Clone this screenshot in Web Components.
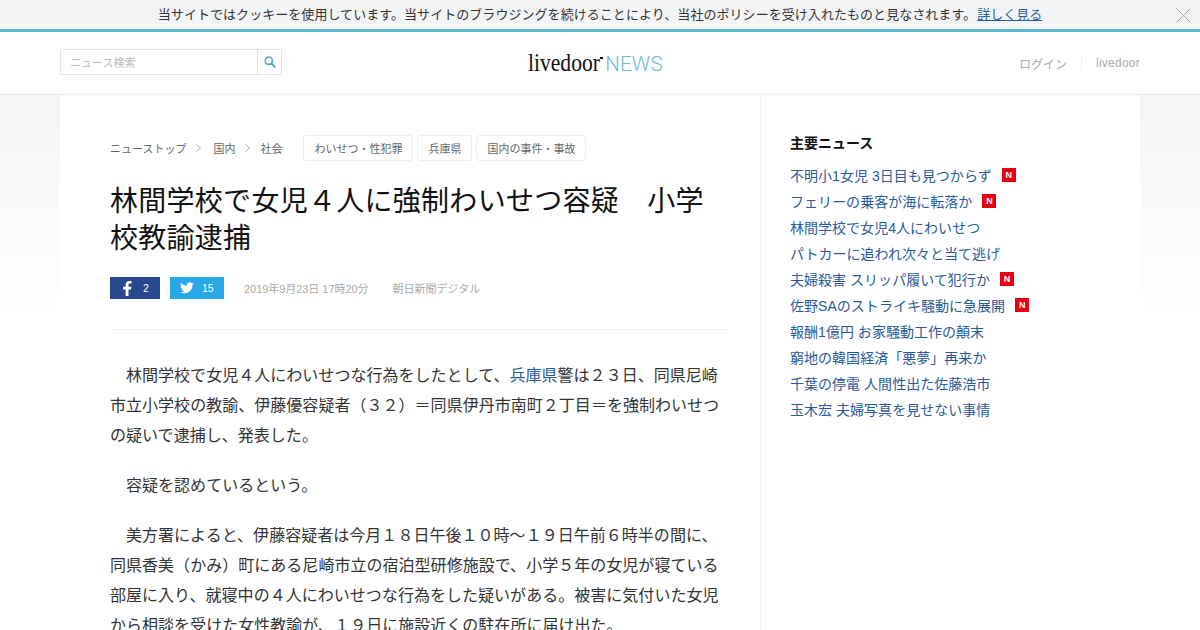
<!DOCTYPE html>
<html lang="ja">
<head>
<meta charset="utf-8">
<title>livedoor NEWS</title>
<style>
  html, body { margin: 0; height: 630px; overflow: hidden; }
  body {
    font-family: "Liberation Sans", "Noto Sans CJK JP", sans-serif;
    background: linear-gradient(#f3f4f5 95px, #fff 330px);
    display: flex;
    flex-direction: column;
  }
  news-article a { color: #2a5a9e; text-decoration: none; }
</style>
</head>
<body>
<cookie-bar>当サイトではクッキーを使用しています。当サイトのブラウジングを続けることにより、当社のポリシーを受け入れたものと見なされます。</cookie-bar>
<site-header></site-header>
<page-main>
  <news-article>
    <p>林間学校で女児４人にわいせつな行為をしたとして、<a href="#">兵庫県</a>警は２３日、同県尼崎市立小学校の教諭、伊藤優容疑者（３２）＝同県伊丹市南町２丁目＝を強制わいせつの疑いで逮捕し、発表した。</p>
    <p>容疑を認めているという。</p>
    <p>美方署によると、伊藤容疑者は今月１８日午後１０時～１９日午前６時半の間に、同県香美（かみ）町にある尼崎市立の宿泊型研修施設で、小学５年の女児が寝ている部屋に入り、就寝中の４人にわいせつな行為をした疑いがある。被害に気付いた女児から相談を受けた女性教諭が、１９日に施設近くの駐在所に届け出た。</p>
  </news-article>
  <news-side>
    <news-item new>不明小1女児 3日目も見つからず</news-item>
    <news-item new>フェリーの乗客が海に転落か</news-item>
    <news-item>林間学校で女児4人にわいせつ</news-item>
    <news-item>パトカーに追われ次々と当て逃げ</news-item>
    <news-item new>夫婦殺害 スリッパ履いて犯行か</news-item>
    <news-item new>佐野SAのストライキ騒動に急展開</news-item>
    <news-item>報酬1億円 お家騒動工作の顛末</news-item>
    <news-item>窮地の韓国経済「悪夢」再来か</news-item>
    <news-item>千葉の停電 人間性出た佐藤浩市</news-item>
    <news-item>玉木宏 夫婦写真を見せない事情</news-item>
  </news-side>
</page-main>
<script>
class CookieBar extends HTMLElement {
  constructor() {
    super();
    this.attachShadow({ mode: 'open' });
    this.shadowRoot.innerHTML = `
      <style>
        :host {
          display: flex;
          flex: none;
          justify-content: center;
          align-items: center;
          position: relative;
          box-sizing: border-box;
          height: 32px;
          padding-bottom: 2px;
          background: #f3f4f5;
          border-bottom: 3px solid #5bb7ce;
          font-size: 13px;
          letter-spacing: 0.05px;
          color: #333;
        }
        a { color: #2a5a9e; margin-left: 1px; letter-spacing: 0; }
        svg { position: absolute; right: 9px; top: 8px; }
      </style>
      <span><slot></slot><a href="#">詳しく見る</a></span>
      <svg width="15" height="15" viewBox="0 0 15 15" fill="none" stroke="#aaa" stroke-width="1"><path d="M0.5 0.5l14 14M14.5 0.5l-14 14"/></svg>
    `;
  }
}

class SiteHeader extends HTMLElement {
  constructor() {
    super();
    this.attachShadow({ mode: 'open' });
    this.shadowRoot.innerHTML = `
      <style>
        :host {
          display: grid;
          grid-template-columns: 1fr auto 1fr;
          align-items: center;
          flex: none;
          height: 62px;
          padding: 0 60px;
          background: #fff;
          border-bottom: 1px solid #e8e8e8;
        }
        .search { display: flex; width: 222px; height: 26px; margin-top: -2px; box-sizing: border-box; border: 1px solid #e2e5e5; }
        .search span { flex: 1; padding-left: 9px; font-size: 11px; line-height: 26px; color: #bbb; }
        .search i { display: flex; width: 23px; align-items: center; justify-content: center; border-left: 1px solid #e2e5e5; }
        .logo { display: flex; align-items: baseline; margin-right: 9px; }
        .logo b { display: block; width: 73px; font: 400 26px/1 "Liberation Serif", serif; color: #111; transform: scaleX(.83); transform-origin: left; white-space: nowrap; }
        .logo sup { width: 3px; height: 2px; background: #111; align-self: flex-start; margin: 7px 2px 0 -1px; }
        .logo span { font: 300 20.5px/1 Roboto, sans-serif; color: #6cbcd3; letter-spacing: 0.2px; }
        nav { display: flex; justify-content: flex-end; align-items: center; font-size: 12px; color: #aaa; }
        nav span + span { margin-left: 14px; padding-left: 14px; border-left: 1px solid #eee; letter-spacing: 0.25px; }
      </style>
      <div class="search">
        <span>ニュース検索</span>
        <i><svg width="12" height="12" viewBox="0 0 13 13" fill="none" stroke="#52abc6" stroke-width="1.8"><circle cx="5.200" cy="5.200" r="3.900"/><path d="M8 8l4.200 4.200" stroke-width="2.200"/></svg></i>
      </div>
      <div class="logo"><b>livedoor</b><sup></sup><span>NEWS</span></div>
      <nav><span>ログイン</span><span>livedoor</span></nav>
    `;
  }
}

class PageMain extends HTMLElement {
  constructor() {
    super();
    this.attachShadow({ mode: 'open' });
    this.shadowRoot.innerHTML = `
      <style>
        :host {
          display: flex;
          flex: 1;
          min-height: 0;
          margin: 0 60px;
          background: #fff;
          overflow: hidden;
        }
      </style>
      <slot></slot>
    `;
  }
}

class NewsArticle extends HTMLElement {
  constructor() {
    super();
    this.attachShadow({ mode: 'open' });
    this.shadowRoot.innerHTML = `
      <style>
        :host {
          display: block;
          flex: none;
          box-sizing: border-box;
          width: 701px;
          padding: 40px 30px 0 50px;
          border-right: 1px solid #f3f3f3;
        }
        .crumbs { display: flex; align-items: center; height: 26px; font-size: 11px; color: #666; }
        .crumbs svg { margin: 0 11px 0 10px; }
        .crumbs svg.first { margin-right: 12px; }
        .crumbs svg.second { margin-right: 10px; }
        .tags { display: flex; gap: 4px; margin-left: 21px; }
        .tags span { height: 24px; line-height: 26px; padding: 0 10px; border: 1px solid #eee; border-radius: 3px; }
        h1 { margin: 22px 0 0; font-size: 28px; font-weight: 400; line-height: 37px; letter-spacing: 0.28px; color: #111; }
        .meta { display: flex; align-items: center; height: 22px; margin-top: 20px; padding-bottom: 30px; border-bottom: 1px solid #f3f3f3; font-size: 11px; color: #aaa; }
        .btn { display: flex; align-items: center; height: 22px; color: #fff; font-size: 10.5px; }
        .fb { width: 50px; background: #26488f; margin-right: 10px; }
        .fb svg { margin: 0 11px 0 13px; }
        .tw { width: 54px; background: #2ba6ea; margin-right: 20px; }
        .tw svg { margin: 0 8px 0 10px; }
        .date { letter-spacing: -0.05px; }
        .source { margin-left: 24px; }
        .body { margin-top: 31px; font-size: 16px; line-height: 30px; letter-spacing: 0.03px; color: #333; }
        ::slotted(p) { margin: 0 0 20px; text-indent: 1em; }
      </style>
      <div class="crumbs">
        <span>ニューストップ</span>
        <svg class="first" width="5" height="8" viewBox="0 0 5 8" fill="none" stroke="#aaa"><path d="M0.5 0.5l4 3.5-4 3.5"/></svg>
        <span>国内</span>
        <svg class="second" width="5" height="8" viewBox="0 0 5 8" fill="none" stroke="#aaa"><path d="M0.5 0.5l4 3.5-4 3.5"/></svg>
        <span>社会</span>
        <div class="tags"><span>わいせつ・性犯罪</span><span>兵庫県</span><span>国内の事件・事故</span></div>
      </div>
      <h1>林間学校で女児４人に強制わいせつ容疑　小学校教諭逮捕</h1>
      <div class="meta">
        <div class="btn fb"><svg width="9" height="15" viewBox="0 0 9 15" fill="#fff"><path d="M2.6 15V8.4H0V5.7h2.6V3.8C2.6 1.300 4.100 0 6.300 0c1 0 1.900.1 2.200.1v2.500H7c-1.200 0-1.500.6-1.500 1.400v1.700h2.900l-.4 2.700H5.500V15z"/></svg>2</div>
        <div class="btn tw"><svg width="14" height="12" viewBox="0 0 24 20" fill="#fff"><path d="M24 2.400c-.9.4-1.800.7-2.800.8 1-.6 1.800-1.600 2.200-2.700-1 .6-2 1-3.100 1.200C19.300.6 18 0 16.600 0c-2.700 0-4.900 2.200-4.900 4.900 0 .4 0 .8.100 1.100C7.700 5.800 4.100 3.900 1.700.9c-.4.700-.7 1.600-.7 2.500 0 1.700.9 3.200 2.200 4.100-.8 0-1.600-.2-2.200-.6v.1c0 2.400 1.700 4.400 3.900 4.800-.4.100-.8.2-1.300.2-.3 0-.6 0-.9-.1.600 2 2.400 3.400 4.600 3.400-1.700 1.300-3.800 2.100-6.100 2.100-.4 0-.8 0-1.200-.1C2.200 18.300 4.800 19 7.500 19c9.100 0 14-7.500 14-14v-.6c1-.7 1.800-1.500 2.500-2z"/></svg>15</div>
        <span class="date">2019年9月23日 17時20分</span>
        <span class="source">朝日新聞デジタル</span>
      </div>
      <div class="body"><slot></slot></div>
    `;
  }
}

class NewsSide extends HTMLElement {
  constructor() {
    super();
    this.attachShadow({ mode: 'open' });
    this.shadowRoot.innerHTML = `
      <style>
        :host { display: block; flex: 1; padding: 38px 0 0 29px; }
        h2 { margin: 0 0 9px; font-size: 14px; line-height: 20px; color: #111; }
      </style>
      <h2>主要ニュース</h2>
      <slot></slot>
    `;
  }
}

class NewsItem extends HTMLElement {
  constructor() {
    super();
    this.attachShadow({ mode: 'open' });
    const badge = this.hasAttribute('new') ? '<b>N</b>' : '';
    this.shadowRoot.innerHTML = `
      <style>
        :host { display: flex; align-items: center; height: 26px; font-size: 14px; letter-spacing: 0.03px; color: #2a5a9e; }
        b {
          display: block;
          width: 14px;
          height: 14px;
          margin: -1px 0 0 10px;
          background: #e60012;
          color: #fff;
          font-size: 9px;
          line-height: 14px;
          text-align: center;
        }
      </style>
      <span><slot></slot></span>${badge}
    `;
  }
}

customElements.define('cookie-bar', CookieBar);
customElements.define('site-header', SiteHeader);
customElements.define('page-main', PageMain);
customElements.define('news-article', NewsArticle);
customElements.define('news-side', NewsSide);
customElements.define('news-item', NewsItem);
</script>
</body>
</html>
